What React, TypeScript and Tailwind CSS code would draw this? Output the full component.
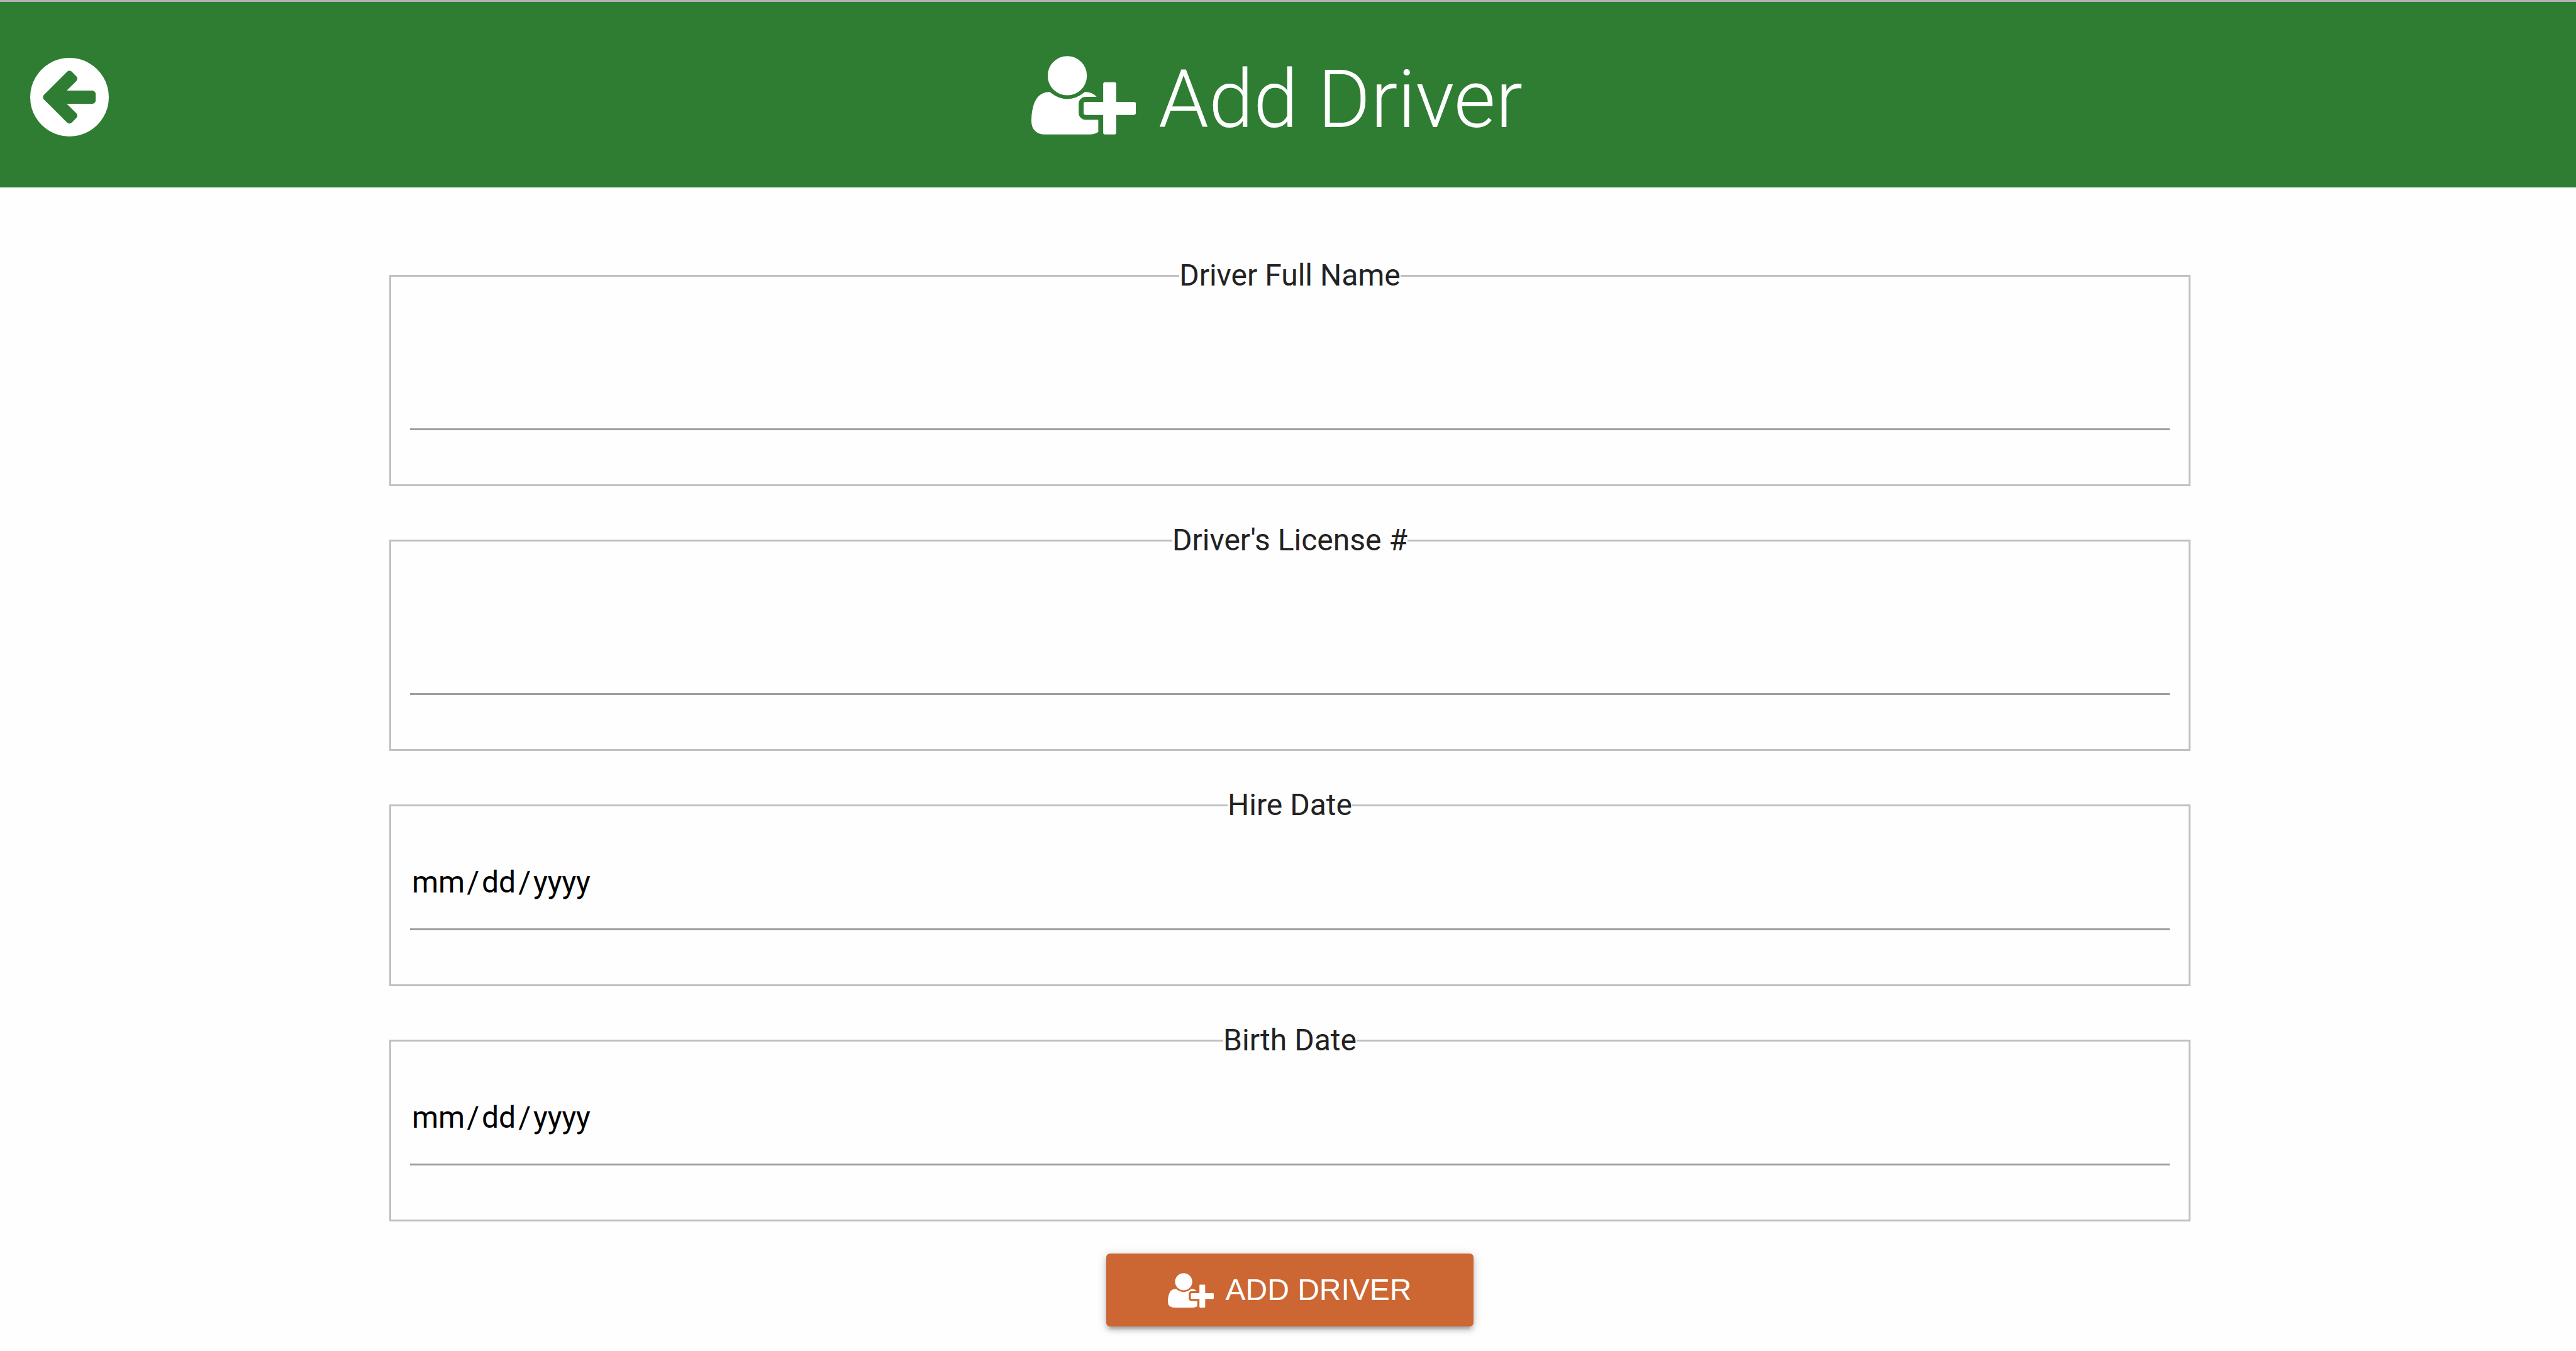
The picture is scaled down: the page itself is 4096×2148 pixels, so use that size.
import React from "react";

function UserPlusIcon({ className }: { className: string }) {
  return (
    <svg viewBox="0 128 2048 1536" className={className} fill="currentColor" aria-hidden="true">
      <path d="M704 896q-159 0-271.5-112.5t-112.5-271.5 112.5-271.5 271.5-112.5 271.5 112.5 112.5 271.5-112.5 271.5-271.5 112.5zm960 128h352q13 0 22.5 9.5t9.5 22.5v192q0 13-9.5 22.5t-22.5 9.5h-352v352q0 13-9.5 22.5t-22.5 9.5h-192q-13 0-22.5-9.5t-9.5-22.5v-352h-352q-13 0-22.5-9.5t-9.5-22.5v-192q0-13 9.5-22.5t22.5-9.5h352v-352q0-13 9.5-22.5t22.5-9.5h192q13 0 22.5 9.5t9.5 22.5v352zm-736 224q0 52 38 90t90 38h256v238q-68 50-171 50h-874q-121 0-194-69t-73-190q0-53 3.5-103.5t14-109 26.5-108.5 43-97.5 62-81 85.5-53.5 111.5-20q19 0 39 17 79 61 154.5 91.5t164.5 30.5 164.5-30.5 154.5-91.5q20-17 39-17 132 0 217 96h-223q-52 0-90 38t-38 90v192z" />
    </svg>
  );
}

function ArrowCircleLeftIcon({ className }: { className: string }) {
  return (
    <svg viewBox="128 128 1536 1536" className={className} fill="currentColor" aria-hidden="true">
      <path d="M1408 960v-128q0-26-19-45t-45-19h-502l189-189q19-19 19-45t-19-45l-91-91q-18-18-45-18t-45 18l-362 362-91 91q-18 18-18 45t18 45l91 91 362 362q18 18 45 18t45-18l91-91q18-18 18-45t-18-45l-189-189h502q26 0 45-19t19-45zm256-64q0 209-103 385.500t-279.500 279.500-385.500 103-385.500-103-279.500-279.500-103-385.500 103-385.500 279.500-279.500 385.500-103 385.500 103 279.500 279.500 103 385.500z" />
    </svg>
  );
}

const FIELDS = [
  { id: "full-name", label: "Driver Full Name", type: "text" },
  { id: "license", label: "Driver's License #", type: "text" },
  { id: "hire-date", label: "Hire Date", type: "date" },
  { id: "birth-date", label: "Birth Date", type: "date" },
];

const TEXT_INPUT = "h-[214px]";
const DATE_INPUT =
  "h-[167px] pt-[18px] [&::-webkit-calendar-picker-indicator]:hidden [&::-webkit-datetime-edit]:p-0 [&::-webkit-datetime-edit-fields-wrapper]:p-0 [&::-webkit-datetime-edit-month-field]:px-[3px] [&::-webkit-datetime-edit-day-field]:px-[4px] [&::-webkit-datetime-edit-year-field]:px-[4px]";

export default function App() {
  return (
    <div className="min-h-screen bg-[#fefefe] font-['Roboto',sans-serif] text-[#222222]">
      <header className="flex items-center border-t-[3px] border-[#b3b3b3] bg-[#2f7d32] pt-[29px] pr-[208px] pb-[14px] pl-[48px] text-white">
        <a href="#back" aria-label="Back" className="mb-[8px]">
          <ArrowCircleLeftIcon className="h-[125px] w-[125px]" />
        </a>
        <h1 className="flex flex-1 items-center justify-center gap-[36px] text-[128px] leading-[252px] font-light">
          <UserPlusIcon className="mb-[14px] h-[125px] w-[166px]" />
          Add Driver
        </h1>
      </header>
      <form className="pt-[108px] pr-[613px] pl-[619px]">
        <div className="flex flex-col gap-[54px]">
          {FIELDS.map((f) => (
            <fieldset key={f.id} className="border-[3px] border-[#c0c0c0] px-[30px] pb-[86px]">
              <legend className="mx-auto text-[48px] leading-[64px]">
                <label htmlFor={f.id}>{f.label}</label>
              </legend>
              <input
                id={f.id}
                type={f.type}
                className={`block w-full border-b-[3px] border-[#9e9e9e] bg-transparent text-[48px] text-black outline-none ${
                  f.type === "date" ? DATE_INPUT : TEXT_INPUT
                }`}
              />
            </fieldset>
          ))}
        </div>
        <button
          type="button"
          className="mx-auto mt-[51px] flex h-[116px] items-center gap-[18px] rounded-[6px] bg-[#cc6633] px-[98px] font-['Liberation_Sans',sans-serif] text-[48px] text-white uppercase shadow-[0_6px_6px_0_rgba(0,0,0,0.14),0_10px_3px_-6px_rgba(0,0,0,0.12),0_3px_16px_0_rgba(0,0,0,0.2)]"
        >
          <UserPlusIcon className="h-[55px] w-[73px]" />
          Add Driver
        </button>
      </form>
    </div>
  );
}
